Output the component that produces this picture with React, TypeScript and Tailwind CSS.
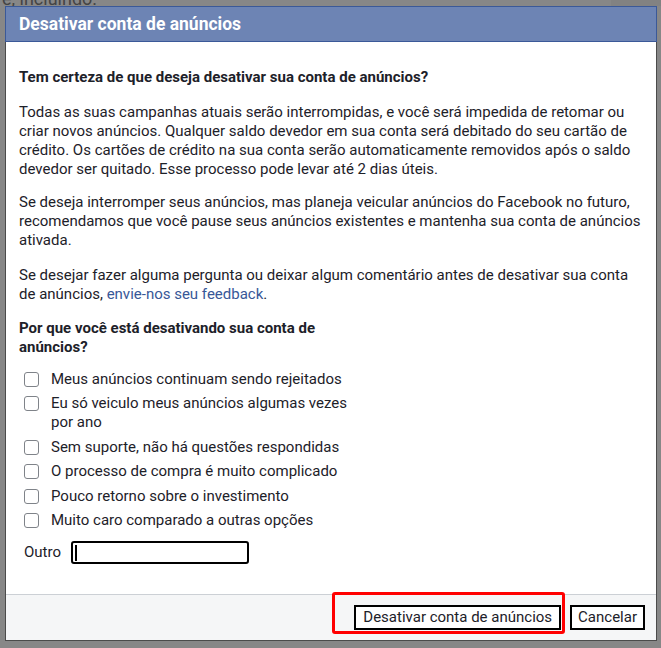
import React from 'react';

const reasons = [
  'Meus anúncios continuam sendo rejeitados',
  'Eu só veiculo meus anúncios algumas vezes por ano',
  'Sem suporte, não há questões respondidas',
  'O processo de compra é muito complicado',
  'Pouco retorno sobre o investimento',
  'Muito caro comparado a outras opções',
];

function ReasonRow({ label }: { label: string }) {
  return (
    <label className="flex items-start gap-3 py-[2.75px] pl-[5px]">
      <span className="mt-[2px] h-[15px] w-[15px] shrink-0 rounded-[3px] border border-[#7f8389] bg-white" />
      <span className="leading-[19px]">{label}</span>
    </label>
  );
}

export default function App() {
  return (
    <div
      className="relative h-[648px] w-[661px] overflow-hidden bg-[#878787] pt-[6px] pl-[5px] text-[15px] text-[#1d2129]"
      style={{ fontFamily: 'Roboto, "Liberation Sans", sans-serif' }}
    >
      {/* page text showing behind the overlay */}
      <div className="absolute -top-[11px] left-[2px] text-[18px] leading-[20px] text-[#444]">e, incluindo.</div>
      <div className="absolute top-0 right-0 h-[6px] w-[50px] bg-[#828282]" />

      <div className="relative flex h-[635px] w-[652px] flex-col border border-[#4b4b4b] bg-white">
        <div className="-mx-px -mt-px flex h-[36px] items-center border border-[#3b5998] bg-[#6d84b4] px-[13px]">
          <h1 className="text-[17.5px] font-bold text-white">Desativar conta de anúncios</h1>
        </div>

        <div className="flex-1 px-[13px] pt-[26px] leading-[19px]">
          <p className="mb-[16px] font-bold">Tem certeza de que deseja desativar sua conta de anúncios?</p>
          <p className="mb-[14px]">
            Todas as suas campanhas atuais serão interrompidas, e você será impedida de retomar ou criar novos
            anúncios. Qualquer saldo devedor em sua conta será debitado do seu cartão de crédito. Os cartões de
            crédito na sua conta serão automaticamente removidos após o saldo devedor ser quitado. Esse processo
            pode levar até 2 dias úteis.
          </p>
          <p className="mb-[16px]">
            Se deseja interromper seus anúncios, mas planeja veicular anúncios do Facebook no futuro, recomendamos
            que você pause seus anúncios existentes e mantenha sua conta de anúncios ativada.
          </p>
          <p className="mb-[15px]">
            Se desejar fazer alguma pergunta ou deixar algum comentário antes de desativar sua conta de anúncios,{' '}
            <a className="text-[#385898]">envie-nos seu feedback</a>.
          </p>

          <div className="w-[335px]">
            <p className="mb-[10px] font-bold">Por que você está desativando sua conta de anúncios?</p>
            <div className="flex flex-col">
              {reasons.map((r) => (
                <ReasonRow key={r} label={r} />
              ))}
            </div>
            <div className="mt-[8px] flex items-center gap-[10px] pl-[5px]">
              <span>Outro</span>
              <div className="flex h-[23px] w-[178px] items-center rounded-[3px] border-2 border-black bg-white pl-[2px]">
                <span className="h-[16px] w-[2px] bg-black" />
              </div>
            </div>
          </div>
        </div>

        <div className="flex h-[46px] items-center justify-end gap-[9px] border-t border-[#ccd0d5] bg-[#f5f6f7] pr-[11px]">
          <div className="relative">
            <button className="h-[25px] border-2 border-black bg-white px-[7px] leading-[19px]">
              Desativar conta de anúncios
            </button>
            <span className="pointer-events-none absolute -top-[13px] -left-[22px] -right-[4px] -bottom-[4px] rounded-[3px] border-[3px] border-[#ff0000]" />
          </div>
          <button className="h-[25px] border-2 border-black bg-white px-[6px] leading-[19px]">Cancelar</button>
        </div>
      </div>
    </div>
  );
}
